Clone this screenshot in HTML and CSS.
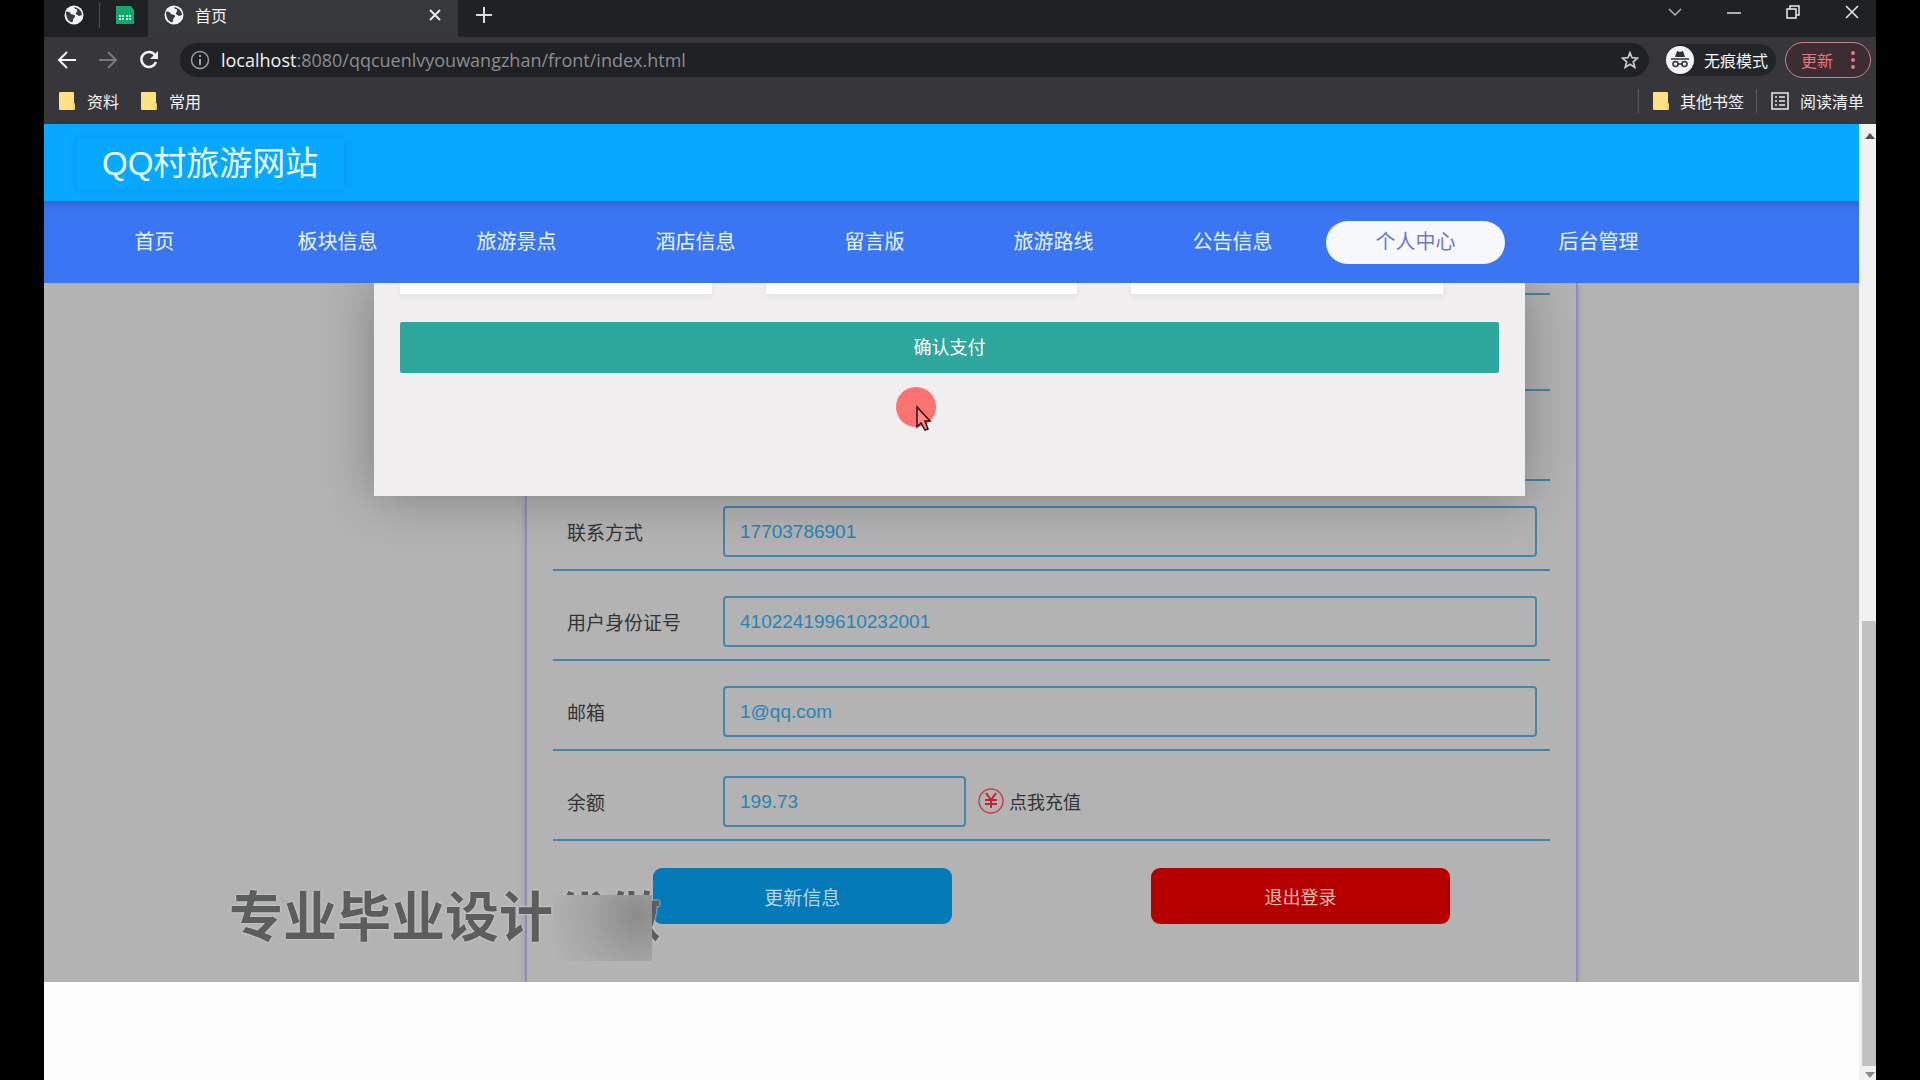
FILE: index.html
```html
<!DOCTYPE html>
<html lang="zh-CN">

<head>
    <meta charset="UTF-8">
    <meta name="viewport" content="width=device-width, initial-scale=1.0">
    <title>首页</title>
    <link rel="stylesheet" href="styles.css">
</head>

<body>
    <svg class="defs" aria-hidden="true">
        <symbol id="globe" viewBox="0 0 20 20">
            <circle cx="10" cy="10" r="9.5" fill="#f1f3f4"/>
            <path d="M2 7c2-1 4 0 5 2 1 1 4 0 4 2s-2 2-2 4-1 3-2 2c-3-1-5-5-5-10zM9 2c2 0 1 2 3 2s1 3 0 4 2 2 3 3l3-1c0-4-4-8-9-8z" fill="#3a3b3f"/>
        </symbol>
        <symbol id="folder" viewBox="0 0 16 18">
            <path d="M1 0h13a1 1 0 0 1 1 1v10l1 1v5a1 1 0 0 1-1 1H1a1 1 0 0 1-1-1V1a1 1 0 0 1 1-1z" fill="#fde082"/>
            <path d="M15 11v7" stroke="#e5bd52"/>
        </symbol>
    </svg>

    <!-- 浏览器顶部 -->
    <div class="chrome">
        <div class="tabs">
            <div class="pinned">
                <svg class="icon20"><use href="#globe"/></svg>
                <span class="tab-line"></span>
                <svg class="icon20" viewBox="0 0 20 20"><path d="M1 1h15l3 4v14H1z" fill="#12a86b"/><path d="M4 11h5M11 11h5M4 14h5M11 14h5" stroke="#b9ecd4" stroke-width="2" stroke-dasharray="2 1"/></svg>
            </div>
            <div class="tab">
                <svg class="icon20"><use href="#globe"/></svg>
                <span class="tab-title">首页</span>
                <button class="plain" aria-label="关闭标签页"><svg class="icon12" viewBox="0 0 12 12"><path d="M1 1l10 10M11 1L1 11" stroke="#e8eaed" stroke-width="2"/></svg></button>
            </div>
            <button class="plain new-tab" aria-label="新标签页"><svg class="icon16" viewBox="0 0 16 16"><path d="M8 0v16M0 8h16" stroke="#dadce0" stroke-width="2"/></svg></button>
            <div class="win">
                <button class="plain" aria-label="搜索标签页"><svg class="icon14" viewBox="0 0 14 14"><path d="M1 4l6 6 6-6" fill="none" stroke="#b0b2b5" stroke-width="1.5"/></svg></button>
                <button class="plain" aria-label="最小化"><svg class="icon14" viewBox="0 0 14 14"><path d="M0 8h14" stroke="#dadce0" stroke-width="1.5"/></svg></button>
                <button class="plain" aria-label="还原"><svg class="icon14" viewBox="0 0 14 14"><path d="M1 4h9v9H1zM4 4V1h9v9h-3" fill="none" stroke="#e8eaed" stroke-width="1.5"/></svg></button>
                <button class="plain" aria-label="关闭"><svg class="icon14" viewBox="0 0 14 14"><path d="M1 1l12 12M13 1L1 13" stroke="#e8eaed" stroke-width="1.5"/></svg></button>
            </div>
        </div>
        <div class="toolbar">
            <button class="plain" aria-label="后退"><svg class="icon20" viewBox="0 0 20 20"><path d="M19 10H3M10 2l-8 8 8 8" fill="none" stroke="#f1f3f4" stroke-width="2"/></svg></button>
            <button class="plain" aria-label="前进"><svg class="icon20" viewBox="0 0 20 20"><path d="M1 10h16M10 2l8 8-8 8" fill="none" stroke="#77797c" stroke-width="2"/></svg></button>
            <button class="plain" aria-label="刷新"><svg class="icon20" viewBox="0 0 20 20"><path d="M17 12a7.500 7.500 0 1 1-1-7l2 2" fill="none" stroke="#f1f3f4" stroke-width="2.500"/><path d="M19 1v8h-8z" fill="#f1f3f4"/></svg></button>
            <div class="address">
                <svg class="icon20" viewBox="0 0 20 20"><circle cx="10" cy="10" r="8.500" fill="none" stroke="#9aa0a6" stroke-width="1.500"/><path d="M10 9v6M10 5v2" stroke="#9aa0a6" stroke-width="2"/></svg>
                <span class="url"><b>localhost</b>:8080/qqcuenlvyouwangzhan/front/index.html</span>
                <button class="plain" aria-label="收藏"><svg class="icon18" viewBox="0 0 20 20"><path d="M10 2l2.300 5.500 6 .5-4.600 4 1.500 6L10 14.700 4.800 18l1.500-6-4.600-4 6-.5z" fill="none" stroke="#c4c7ca" stroke-width="2"/></svg></button>
            </div>
            <div class="incognito">
                <svg class="icon28" viewBox="0 0 28 28"><circle cx="14" cy="14" r="14" fill="#f1f3f4"/><path d="M5 13h18" stroke="#303134" stroke-width="1.500"/><path d="M9 11l2-6 3 1 3-1 2 6z" fill="#303134"/><path d="M12 18h4" stroke="#303134" stroke-width="1.500"/><circle cx="9.500" cy="18" r="2.500" fill="none" stroke="#303134" stroke-width="1.500"/><circle cx="18.500" cy="18" r="2.500" fill="none" stroke="#303134" stroke-width="1.500"/></svg>
                <span>无痕模式</span>
            </div>
            <button class="update">更新<svg class="dots" viewBox="0 0 4 18"><circle cx="2" cy="2" r="2"/><circle cx="2" cy="9" r="2"/><circle cx="2" cy="16" r="2"/></svg></button>
        </div>
        <div class="bookmarks">
            <a href="#"><svg class="folder"><use href="#folder"/></svg>资料</a>
            <a href="#"><svg class="folder"><use href="#folder"/></svg>常用</a>
            <div class="marks-right">
                <a href="#"><svg class="folder"><use href="#folder"/></svg>其他书签</a>
                <a href="#"><svg class="list" viewBox="0 0 18 18"><path d="M1 1h16v16H1z" fill="none" stroke="#e8eaed" stroke-width="1.500"/><path d="M4 5h2M4 9h2M4 13h2M8 5h6M8 9h6M8 13h6" stroke="#e8eaed" stroke-width="1.500"/></svg>阅读清单</a>
            </div>
        </div>
    </div>

    <div class="view">
        <div class="page">
            <header class="header">
                <h1 class="logo">QQ村旅游网站</h1>
            </header>
            <nav class="nav">
                <a class="first" href="#">首页</a>
                <a href="#">板块信息</a>
                <a href="#">旅游景点</a>
                <a href="#">酒店信息</a>
                <a href="#">留言版</a>
                <a href="#">旅游路线</a>
                <a href="#">公告信息</a>
                <a class="active" href="#">个人中心</a>
                <a href="#">后台管理</a>
            </nav>

            <main class="main">
                <form class="panel">
                    <div class="row cut"></div>
                    <div class="row tall"></div>
                    <div class="row"></div>
                    <div class="row">
                        <label for="phone">联系方式</label>
                        <input type="text" id="phone" value="17703786901">
                    </div>
                    <div class="row">
                        <label for="card">用户身份证号</label>
                        <input type="text" id="card" value="410224199610232001">
                    </div>
                    <div class="row">
                        <label for="mail">邮箱</label>
                        <input type="text" id="mail" value="1@qq.com">
                    </div>
                    <div class="row">
                        <label for="money">余额</label>
                        <input type="text" id="money" class="short" value="199.73">
                        <a class="charge" href="#">
                            <svg class="yen" viewBox="0 0 26 26"><circle cx="13" cy="13" r="12" fill="none" stroke="#c0444c" stroke-width="1.500"/><path d="M8 5l5 7 5-7M7 12h12M7 16h12M13 12v8" fill="none" stroke="#bd2630" stroke-width="2"/></svg>
                            点我充值
                        </a>
                    </div>
                    <div class="btns">
                        <button type="button" class="save">更新信息</button>
                        <button type="button" class="logout">退出登录</button>
                    </div>
                </form>

                <!-- 支付弹窗 -->
                <div class="modal">
                    <div class="cards">
                        <div class="card"></div>
                        <div class="card"></div>
                        <div class="card"></div>
                    </div>
                    <button class="pay">确认支付</button>
                </div>

                <div class="pointer">
                    <svg viewBox="0 0 42 46"><circle cx="21" cy="21" r="20" fill="#fa7371"/><path d="M22 21v20l4-4 4 7 3-1-3-8h5z" fill="#fa8b87" stroke="#2b1516" stroke-width="1.500"/></svg>
                </div>

                <div class="mark">专业毕业设计代做<span class="mosaic"></span></div>
            </main>
        </div>

        <div class="scroll">
            <svg class="arrow" viewBox="0 0 10 6"><path d="M0 6l5-6 5 6z" fill="#505050"/></svg>
            <div class="thumb"></div>
            <svg class="arrow" viewBox="0 0 10 6"><path d="M0 0l5 6 5-6z" fill="#8b8b8d"/></svg>
        </div>
    </div>
</body>

</html>
```
FILE: styles.css
```css
* {
    box-sizing: border-box;
}

body {
    display: flex;
    flex-direction: column;
    min-height: 100vh;
    margin: 0;
    padding: 0 44px;
    background-color: #000;
    font-family: "Liberation Sans", "Noto Sans CJK SC", sans-serif;
}

a {
    color: inherit;
    text-decoration: none;
}

button,
input {
    font-family: inherit;
}

svg {
    display: block;
    flex: none;
}

.defs {
    position: absolute;
    width: 0;
    height: 0;
}

.icon12 { width: 12px; height: 12px; }
.icon14 { width: 14px; height: 14px; }
.icon16 { width: 16px; height: 16px; }
.icon18 { width: 18px; height: 18px; }
.icon20 { width: 20px; height: 20px; }
.icon28 { width: 28px; height: 28px; }

.plain {
    padding: 0;
    border: 0;
    background: none;
}

/* 浏览器 */
.chrome {
    background-color: #37373b;
    color: #f1f3f4;
    font-size: 16px;
}

.tabs {
    display: flex;
    height: 37px;
    background-color: #202124;
}

.pinned {
    display: flex;
    align-items: center;
    gap: 15px;
    padding: 0 13px 7px 20px;
}

.tab-line {
    width: 1px;
    height: 26px;
    background-color: #4a4c50;
}

.tab {
    display: flex;
    align-items: center;
    width: 310px;
    padding: 0 17px 7px 16px;
    background-color: #37383b;
}

.tab-title {
    flex: 1;
    margin-left: 11px;
}

.new-tab {
    padding: 0 18px 7px;
}

.win {
    display: flex;
    gap: 45px;
    align-items: center;
    margin-left: auto;
    padding: 0 17px 13px 0;
}

.toolbar {
    display: flex;
    align-items: center;
    height: 46px;
    padding: 0 5px 0 13px;
    gap: 21px;
}

.address {
    display: flex;
    flex: 1;
    align-items: center;
    height: 34px;
    padding: 0 10px;
    border-radius: 17px;
    background-color: #202124;
}

.url {
    flex: 1;
    margin-left: 11px;
    color: #8b8d91;
    font-family: "Open Sans", sans-serif;
    font-size: 18px;
    line-height: 30px;
}

.url b {
    color: #f1f3f4;
    font-weight: normal;
}

.incognito {
    display: flex;
    align-items: center;
    gap: 10px;
    height: 32px;
    margin-left: -4px;
    margin-right: -12px;
    padding-right: 8px;
    border-radius: 16px;
    background-color: #242528;
}

.update {
    display: flex;
    align-items: center;
    justify-content: space-between;
    width: 86px;
    height: 36px;
    padding: 0 15px;
    border: 1px solid #c9828a;
    border-radius: 18px;
    background-color: #3b2d31;
    color: #e9777d;
    font-size: 16px;
}

.dots {
    width: 4px;
    height: 18px;
    fill: #e9777d;
}

.bookmarks {
    display: flex;
    align-items: center;
    height: 41px;
    gap: 22px;
    padding: 0 12px 5px 15px;
}

.bookmarks a {
    display: flex;
    align-items: center;
    gap: 12px;
}

.folder {
    width: 16px;
    height: 18px;
}

.list {
    width: 18px;
    height: 18px;
}

.marks-right {
    display: flex;
    gap: 12px;
    margin-left: auto;
}

.marks-right a {
    gap: 11px;
    padding-left: 14px;
    border-left: 1px solid #5c5d61;
}

/* 页面 */
.view {
    display: flex;
    flex: 1;
    background-color: #fdfdfe;
}

.page {
    flex: 1;
    min-width: 0;
}

.header {
    display: flex;
    align-items: center;
    height: 77px;
    padding: 2px 32px 0;
    background-color: #09a8ff;
}

.logo {
    margin: 0;
    padding: 0 26px;
    border-radius: 4px;
    box-shadow: 0 0 8px rgba(0, 90, 190, .25);
    color: #e9fbff;
    font-size: 33px;
    font-weight: normal;
    line-height: 52px;
}

.nav {
    position: relative;
    z-index: 2;
    display: flex;
    align-items: center;
    height: 82px;
    padding-left: 21px;
    background-color: #3a76f4;
    box-shadow: inset 0 8px 8px -4px rgba(0, 0, 0, .14);
    color: #eaf4ff;
    font-size: 20px;
}

.nav a {
    width: 179px;
    border-radius: 22px;
    line-height: 43px;
    text-align: center;
}

.nav .first {
    margin-right: 4px;
}

.nav .active {
    margin: 0 4px;
    background-color: #f7f8fb;
    color: #7076cf;
}

.main {
    position: relative;
    overflow: hidden;
    background-color: #b3b3b3;
}

.panel {
    width: 58%;
    margin-left: 481px;
    padding: 0 26px 58px;
    border: solid #918bb6;
    border-width: 0 2px;
    box-shadow: 0 0 6px rgba(110, 100, 180, .4);
    font-size: 19px;
    color: #333;
}

.row {
    display: flex;
    align-items: center;
    height: 90px;
    padding: 25px 13px 13px 14px;
    border-bottom: 2px solid #4186ab;
}

.cut {
    height: 12px;
    padding: 0;
}

.tall {
    height: 96px;
}

.row label {
    flex: 0 0 156px;
}

.row input {
    flex: 1;
    min-width: 0;
    height: 51px;
    padding: 2px 15px 0;
    border: 2px solid #4186ab;
    border-radius: 4px;
    background: none;
    color: #2885b5;
    font-size: 19px;
}

.row .short {
    flex: 0 0 243px;
}

.charge {
    display: flex;
    align-items: center;
    gap: 5px;
    margin-left: 12px;
    font-size: 18px;
}

.yen {
    width: 26px;
    height: 26px;
}

.btns {
    display: flex;
    justify-content: space-around;
    margin-top: 27px;
}

.btns button {
    width: 30%;
    height: 56px;
    border: 0;
    border-radius: 9px;
    font-size: 18px;
}

.btns .save {
    background-color: #0379b8;
    color: #b7d5e6;
    font-size: 19px;
}

.logout {
    background-color: #b60000;
    color: #e9b9ae;
}

.modal {
    position: absolute;
    top: 0;
    left: 330px;
    right: 334px;
    padding: 0 26px 123px;
    background-color: #f0eeef;
    box-shadow: 0 0 50px rgba(0, 0, 0, .3);
}

.cards {
    display: flex;
    gap: 54px;
    padding-right: 56px;
}

.card {
    flex: 1;
    height: 11px;
    background-color: #fff;
    box-shadow: 0 2px 6px rgba(0, 0, 0, .06);
}

.pay {
    display: block;
    width: 100%;
    height: 51px;
    margin-top: 28px;
    padding: 0 0 3px;
    border: 0;
    border-radius: 2px;
    background-color: #2ea79c;
    color: #fff;
    font-size: 18px;
}

.pointer {
    position: absolute;
    top: 103px;
    left: 851px;
    width: 42px;
}

.mark {
    position: absolute;
    bottom: 24px;
    left: 185px;
    color: rgba(70, 72, 72, .85);
    font-size: 54px;
    font-weight: bold;
    line-height: 80px;
    text-shadow: 0 0 2px #d5d5d5, 0 0 2px #d5d5d5;
}

.mosaic {
    position: absolute;
    right: 9px;
    bottom: -3px;
    width: 99px;
    height: 66px;
    background: radial-gradient(circle at 85% 30%, #8a8b8a, #a3a4a3 50%, #b3b4b3);
}

.scroll {
    display: flex;
    flex-direction: column;
    align-items: flex-end;
    width: 17px;
    background-color: #f1f1f2;
}

.arrow {
    width: 10px;
    height: 6px;
    margin: 9px 1px 5px;
}

.thumb {
    width: 14px;
    height: 46.5%;
    margin-top: auto;
    background-color: #c1c0c3;
}

.scroll .arrow:last-child {
    margin: 6px 1px 2px;
}
```
